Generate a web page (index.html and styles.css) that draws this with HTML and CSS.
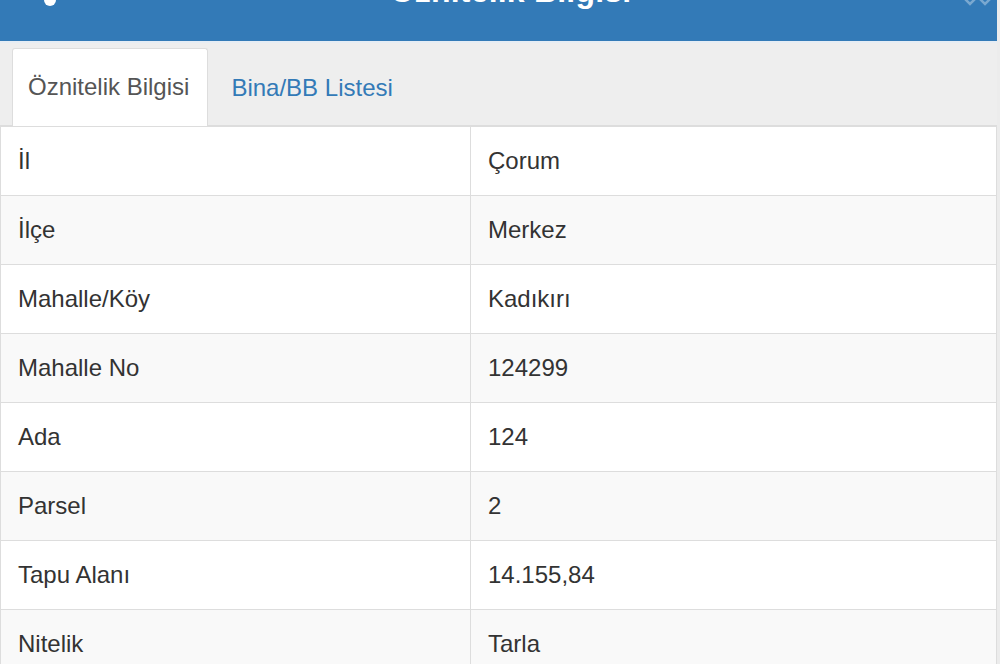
FILE: index.html
```html
<!DOCTYPE html>
<html lang="tr">
<head>
<meta charset="utf-8">
<title>Öznitelik Bilgisi</title>
<link rel="stylesheet" href="styles.css">
</head>
<body>
<div class="panel">
  <header class="panel-head">
    <span class="head-icon-left"></span>
    <h1 class="head-title">Öznitelik Bilgisi</h1>
    <span class="head-icon-right">
      <svg width="32" height="10" viewBox="0 0 32 10"><path d="M2 -2 L8 4 L14 -2" fill="none" stroke="rgba(255,255,255,0.35)" stroke-width="2.5"/><path d="M17 -2 L23 4 L29 -2" fill="none" stroke="rgba(255,255,255,0.35)" stroke-width="2.5"/></svg>
    </span>
  </header>
  <nav class="tabs">
    <a class="tab active">Öznitelik Bilgisi</a>
    <a class="tab">Bina/BB Listesi</a>
  </nav>
  <table class="attr-table">
    <tbody>
      <tr><td class="key">İl</td><td>Çorum</td></tr>
      <tr><td class="key">İlçe</td><td>Merkez</td></tr>
      <tr><td class="key">Mahalle/Köy</td><td>Kadıkırı</td></tr>
      <tr><td class="key">Mahalle No</td><td>124299</td></tr>
      <tr><td class="key">Ada</td><td>124</td></tr>
      <tr><td class="key">Parsel</td><td>2</td></tr>
      <tr><td class="key">Tapu Alanı</td><td>14.155,84</td></tr>
      <tr><td class="key">Nitelik</td><td>Tarla</td></tr>
    </tbody>
  </table>
</div>
</body>
</html>
```

FILE: styles.css
```css
html, body {
  margin: 0;
  padding: 0;
}
body {
  width: 1000px;
  height: 664px;
  overflow: hidden;
  background: #ececec;
  font-family: "Liberation Sans", Arial, sans-serif;
  color: #333;
}
.panel {
  width: 997px;
  background: #fff;
  min-height: 664px;
}
.panel-head {
  position: relative;
  height: 41px;
  background: #337ab7;
  border-bottom: 2px solid #e6edf4;
  overflow: hidden;
  display: flex;
  justify-content: center;
  padding-left: 24px;
}
.head-title {
  margin: -27px 0 0 0;
  font-size: 32px;
  line-height: 36px;
  font-weight: bold;
  color: #fff;
  letter-spacing: 0.2px;
}
.head-icon-left {
  position: absolute;
  left: 44px;
  top: -6px;
  width: 12px;
  height: 12px;
  border-radius: 50%;
  background: #fff;
}
.head-icon-right {
  position: absolute;
  left: 962px;
  top: 0;
  line-height: 0;
}
.tabs {
  display: flex;
  align-items: flex-end;
  height: 82px;
  padding-left: 12px;
  background: #eeeeee;
  border-bottom: 1px solid #dddddd;
}
.tab {
  display: block;
  padding: 21px 18px 21px 15px;
  line-height: 34px;
  font-size: 24px;
  color: #337ab7;
  border: 1px solid transparent;
  border-bottom: 0;
  margin-bottom: -1px;
  margin-right: 7px;
  text-decoration: none;
  border-radius: 3px 3px 0 0;
}
.tab.active {
  color: #555;
  background: #fff;
  border-color: #dddddd;
  padding-bottom: 22px;
}
.attr-table {
  width: 997px;
  border-collapse: collapse;
  border: 1px solid #dddddd;
  font-size: 24px;
}
.attr-table td {
  border: 1px solid #dddddd;
  height: 68px;
  padding: 0 17px;
  line-height: 34px;
  vertical-align: middle;
}
.attr-table td.key {
  width: 435px;
}
.attr-table tr:nth-child(even) td {
  background: #f9f9f9;
}
```
